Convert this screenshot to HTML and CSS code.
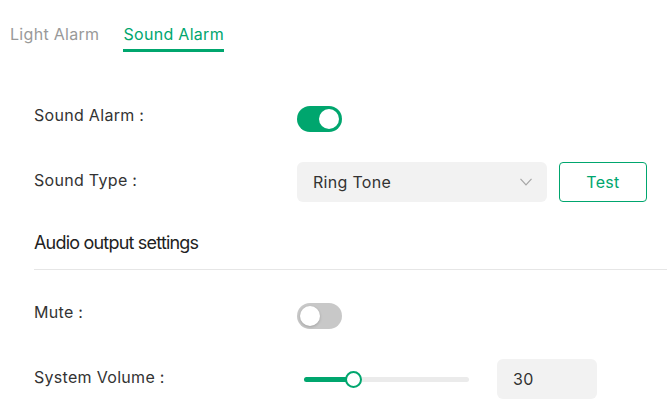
FILE: index.html
```html
<!DOCTYPE html>
<html lang="en">
<head>
<meta charset="utf-8">
<title>Sound Alarm</title>
<link rel="stylesheet" href="styles.css">
</head>
<body>
<nav class="tabs">
  <span class="tab">Light Alarm</span>
  <span class="tab tab-active">Sound Alarm</span>
</nav>
<main class="content">
  <div class="row row-first">
    <span class="label">Sound Alarm :</span>
    <span class="switch switch-on"><span class="knob"></span></span>
  </div>
  <div class="row">
    <span class="label">Sound Type :</span>
    <div class="select">
      <span>Ring Tone</span>
      <svg class="chevron" width="12" height="8" viewBox="0 0 12 8"><polyline points="0.5,0.8 6,6.8 11.5,0.8" fill="none" stroke="#a6a6a6" stroke-width="1.2"/></svg>
    </div>
    <button class="btn-test">Test</button>
  </div>
  <h2 class="section-title">Audio output settings</h2>
  <div class="row row-after-title">
    <span class="label">Mute :</span>
    <span class="switch switch-off"><span class="knob"></span></span>
  </div>
  <div class="row">
    <span class="label">System Volume :</span>
    <div class="slider">
      <div class="slider-fill" style="width: 49px"></div>
      <div class="slider-thumb" style="left: 49px"></div>
    </div>
    <div class="num-input">30</div>
  </div>
</main>
</body>
</html>
```
FILE: styles.css
```css
* { box-sizing: border-box; }
body {
  margin: 0;
  background: #fff;
  font-family: Inter, "Noto Sans", sans-serif;
  font-size: 16px;
  color: #333;
}
.tabs {
  display: flex;
  gap: 24px;
  padding: 22px 0 0 10px;
}
.tab {
  line-height: 24px;
  padding-bottom: 3px;
  border-bottom: 3px solid transparent;
  color: #999;
  letter-spacing: 0.3px;
}
.tab-active {
  color: #00a66e;
  border-bottom-color: #00a66e;
}
.content {
  padding-left: 34px;
}
.row {
  display: flex;
  align-items: center;
  height: 40px;
  margin-top: 25px;
}
.row-first { margin-top: 45px; }
.row-after-title { margin-top: 24px; }
.label {
  width: 263px;
  flex: none;
  padding-bottom: 4px;
  letter-spacing: 0.3px;
}
.switch {
  position: relative;
  width: 45px;
  height: 26px;
  border-radius: 13px;
  margin-top: 4px;
  flex: none;
}
.switch-on { background: #00a66e; }
.switch-off { background: #c8c8c8; }
.knob {
  position: absolute;
  top: 3px;
  width: 20px;
  height: 20px;
  border-radius: 50%;
  background: #fff;
}
.switch-on .knob { right: 3px; }
.switch-off .knob { left: 3px; box-shadow: 0 1px 3px rgba(0,0,0,0.2); }
.select {
  width: 250px;
  height: 40px;
  background: #f2f2f2;
  border-radius: 6px;
  display: flex;
  align-items: center;
  justify-content: space-between;
  padding: 0 15px 0 16px;
  letter-spacing: 0.3px;
}
.chevron { display: block; }
.btn-test {
  margin-left: 12px;
  width: 88px;
  height: 40px;
  border: 1px solid #00a66e;
  border-radius: 4px;
  background: #fff;
  color: #00a66e;
  font-family: inherit;
  font-size: 16px;
  letter-spacing: 0.3px;
}
.section-title {
  margin: 29px 0 0;
  font-size: 18px;
  font-weight: 400;
  line-height: 24px;
  letter-spacing: -0.8px;
  padding-bottom: 14px;
  border-bottom: 1px solid #e6e6e6;
  color: #222;
}
.slider {
  position: relative;
  margin-left: 7px;
  width: 165px;
  height: 5px;
  border-radius: 3px;
  background: #ebebeb;
}
.slider-fill {
  height: 5px;
  border-radius: 3px;
  background: #00a66e;
}
.slider-thumb {
  position: absolute;
  top: -6px;
  margin-left: -8px;
  width: 17px;
  height: 17px;
  border-radius: 50%;
  background: #fff;
  border: 2px solid #00a66e;
}
.num-input {
  margin-left: 28px;
  width: 100px;
  height: 40px;
  background: #f2f2f2;
  border-radius: 6px;
  display: flex;
  align-items: center;
  padding-left: 16px;
  letter-spacing: 0.3px;
}
```
